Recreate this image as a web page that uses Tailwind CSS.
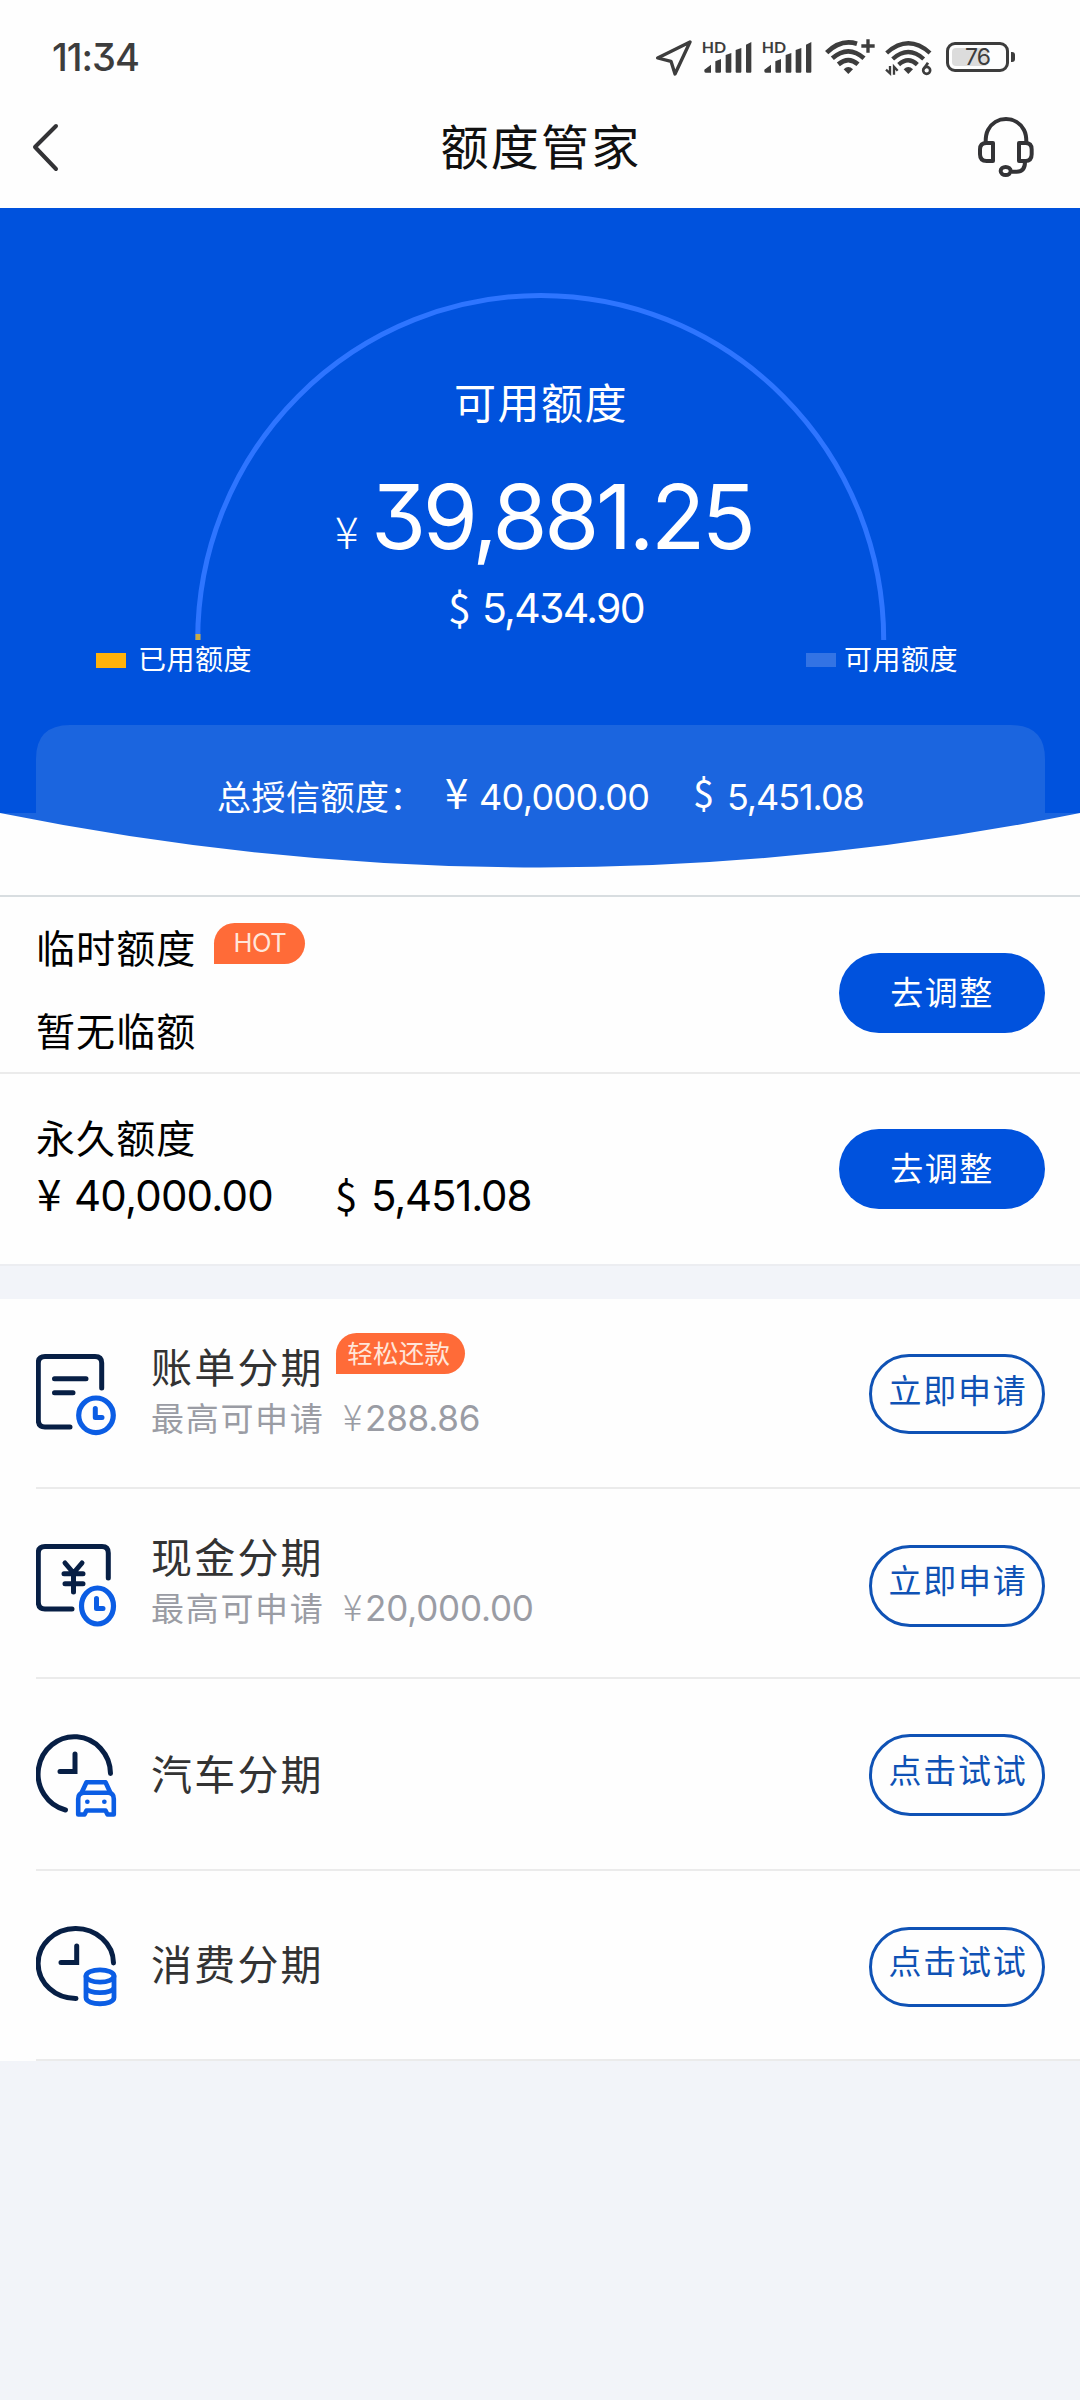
<!DOCTYPE html>
<html lang="zh-CN">
<head>
<meta charset="utf-8">
<title>额度管家</title>
<script src="https://cdn.jsdelivr.net/npm/@tailwindcss/browser@4"></script>
</head>
<body class="w-[1080px] h-[2400px] bg-[#f2f4f9] font-['Noto_Sans_CJK_SC',sans-serif] text-black overflow-hidden">

<!-- Status bar -->
<header class="bg-[#fefefe] h-[208px]">
  <div class="h-[114px] flex items-start justify-between pl-[52px] pr-[65px] text-[#3d3d3d]">
    <div class="mt-[27px] h-[60px] leading-[60px] text-[38px] font-[Inter] font-medium tracking-[-1px] [font-feature-settings:'cv09']">11:34</div>
    <div class="flex items-start">
      <svg class="mt-[40px] mr-[10px] w-[36px] h-[37px]" viewBox="48 60 108 111" fill="none" stroke="#3d3d3d" stroke-width="10" stroke-linejoin="round"><path d="M150 66 L53 114 L93 124 L105 162 Z"/></svg>
      <svg class="mt-[40px] mr-[10px] w-[50px] h-[34px] overflow-visible" viewBox="186 60 150 102" fill="#3d3d3d"><text x="185" y="99" font-size="48" font-weight="700" font-family="Lato" textLength="73" lengthAdjust="spacingAndGlyphs">HD</text><path d="M193 149 L213 134 V158 H197 Q193 158 193 154Z M226 124 L243 117 V155 Q243 158 240 158 H229 Q226 158 226 155Z M257 105 L274 99 V155 Q274 158 271 158 H260 Q257 158 257 155Z M287 90 L304 84 V155 Q304 158 301 158 H290 Q287 158 287 155Z M318 74 L334 66 V155 Q334 158 331 158 H321 Q318 158 318 155Z"/></svg>
      <svg class="mt-[40px] mr-[13px] w-[50px] h-[34px] overflow-visible" viewBox="186 60 150 102" fill="#3d3d3d"><text x="185" y="99" font-size="48" font-weight="700" font-family="Lato" textLength="73" lengthAdjust="spacingAndGlyphs">HD</text><path d="M193 149 L213 134 V158 H197 Q193 158 193 154Z M226 124 L243 117 V155 Q243 158 240 158 H229 Q226 158 226 155Z M257 105 L274 99 V155 Q274 158 271 158 H260 Q257 158 257 155Z M287 90 L304 84 V155 Q304 158 301 158 H290 Q287 158 287 155Z M318 74 L334 66 V155 Q334 158 331 158 H321 Q318 158 318 155Z"/></svg>
      <svg class="mt-[38px] mr-[10px] w-[50px] h-[38px]" viewBox="554 54 150 114" fill="none" stroke="#3d3d3d" stroke-width="14"><path d="M559 98 Q601 56 650 71"/><path d="M576 115 Q624 73 671 115"/><path d="M594 133 Q624 108 653 133"/><path d="M683 58 V98 M663 78 H703" stroke-width="10"/><path d="M610 148 Q624 134 638 148 L624 162Z" fill="#3d3d3d" stroke="none"/></svg>
      <svg class="mt-[40px] mr-[14px] w-[47px] h-[36px]" viewBox="734 60 141 108" fill="none" stroke="#3d3d3d" stroke-width="13"><path d="M739 99 Q804 41 869 99"/><path d="M757 117 Q804 75 850 117"/><path d="M775 134 Q804 108 831 134"/><path d="M790 148 Q804 134 818 148 L804 162Z" fill="#3d3d3d" stroke="none"/><path d="M737 149 L749 160 V138 M772 152 L761 140 V164" stroke-width="7"/><circle cx="859" cy="151" r="10.500" stroke-width="8"/><path d="M850 147 L863 128" stroke-width="8"/></svg>
      <div class="mt-[42px] flex items-center">
        <div class="w-[63px] h-[30px] rounded-[9px] border-[3px] border-[#3d3d3d] p-[3px] relative">
          <div class="w-[36px] h-[18px] bg-[#dcdcdc] rounded-[4px]"></div>
          <div class="absolute inset-0 flex items-center justify-center text-[23px] leading-[24px] font-[Inter] tracking-[-1px]">76</div>
        </div>
        <div class="ml-[2px] w-[4px] h-[10px] rounded-r-[3px] bg-[#3d3d3d]"></div>
      </div>
    </div>
  </div>
  <!-- Title bar -->
  <div class="h-[66px] flex items-center justify-between pl-[32px] pr-[46px]">
    <svg class="w-[56px] h-[50px]" viewBox="0 0 56 50" fill="none" stroke="#333336" stroke-width="4" stroke-linecap="round" stroke-linejoin="round"><path d="M24 4 L3 25 L24 47"/></svg>
    <h1 class="ml-[16px] text-[48px] leading-[66px] tracking-[2.2px] text-[#111] pb-[6px]">额度管家</h1>
    <svg class="w-[56px] h-[60px]" viewBox="1014 293 168 180" fill="none" stroke="#333336" stroke-width="12"><path d="M1037 368 Q1037 345 1044 332 A61 61 0 0 1 1152 332 Q1159 345 1159 368"/><path d="M1059 371 H1040 Q1020 371 1020 390 V405 Q1020 425 1040 425 H1059Z M1137 371 H1156 Q1175 371 1175 390 V405 Q1175 425 1156 425 H1137Z" stroke-linejoin="round"/><path d="M1155 427 Q1155 457 1130 457 H1116"/><ellipse cx="1097" cy="455" rx="15" ry="12"/></svg>
  </div>
</header>

<!-- Limit overview -->
<section class="relative h-[660px] bg-[#fefefe] text-white">
  <svg class="absolute inset-0 w-[1080px] h-[660px]" viewBox="0 0 1080 660">
    <path d="M0 0H1080V605H0Z" fill="#0052dd"/>
    <path d="M36 605 V551 Q36 517 70 517 H1011 Q1045 517 1045 551 V605 H1080 Q540 714 0 605Z" fill="#1b65df"/>
    <path d="M197.700 432 A343 344.500 0 0 1 883.700 432" fill="none" stroke="#2e75ff" stroke-width="5"/>
    <path d="M195.500 426h5v6h-5z" fill="#c9ab45"/>
  </svg>
  <div class="relative pt-[163px]">
    <div class="h-[60px] leading-[60px] text-[42px] tracking-[1.5px] pl-[454px]">可用额度</div>
    <div class="mt-[36px] h-[100px] leading-[100px] flex items-baseline">
      <span class="ml-[335px] w-[36px] text-[44px] font-light">¥</span>
      <span class="text-[89px] font-[Inter] tracking-[-3.4px] [font-feature-settings:'cv09']">39,881.25</span>
    </div>
    <div class="mt-[13px] h-[50px] leading-[50px] text-[41px] flex items-baseline pl-[448px]"><span class="w-[34px]">$</span><span class="font-[Inter] tracking-[-1.7px] [font-feature-settings:'cv09']">5,434.90</span></div>
    <div class="mt-[8px] h-[40px] leading-[40px] text-[28px] tracking-[0.5px] flex items-center">
      <i class="ml-[96px] w-[30px] h-[15px] mt-[5px] bg-[#ffb20a]"></i><span class="ml-[12px] w-[668px]">已用额度</span>
      <i class="w-[30px] h-[14px] mt-[4px] bg-[#3373e4]"></i><span class="ml-[8px]">可用额度</span>
    </div>
    <div class="mt-[84px] h-[60px] leading-[60px] flex items-baseline text-[34px]">
      <span class="ml-[217px] w-[228px] tracking-[0.5px]">总授信额度：</span>
      <span class="w-[34px] text-[42px] -translate-y-[1px]">¥</span><span class="w-[214px] text-[36px] font-[Inter] tracking-[-0.7px]">40,000.00</span>
      <span class="w-[34px] text-[38px] -translate-y-[2px]">$</span><span class="text-[36px] font-[Inter] tracking-[-1.1px]">5,451.08</span>
    </div>
  </div>
</section>

<!-- Limit adjustment -->
<section class="bg-[#fefefe] pt-[27px] h-[396px]">
  <div class="h-[179px] border-y-2 border-t-[#d8dde0] border-b-[#ebebeb] pl-[36px] pr-[35px] flex justify-between items-start">
    <div class="text-[39px] tracking-[1.1px]">
      <div class="mt-[19px] h-[60px] leading-[60px] flex">临时额度
        <span class="ml-[18px] mt-[7px] w-[91px] h-[41px] rounded-[21px] rounded-bl-none bg-[#ff6b38] text-[#ffe6da] text-[25.500px] font-[Inter] tracking-[-0.5px] leading-[40px] text-center">HOT</span>
      </div>
      <div class="mt-[23px] h-[60px] leading-[60px]">暂无临额</div>
    </div>
    <button class="mt-[56px] w-[206px] h-[80px] rounded-full bg-[#0052dd] text-white text-[33px] tracking-[1.5px] leading-[76px] pb-[4px]">去调整</button>
  </div>
  <div class="pl-[36px] pr-[35px] flex justify-between items-start">
    <div>
      <div class="mt-[32px] h-[60px] leading-[60px] text-[39px] tracking-[1.1px]">永久额度</div>
      <div class="mt-[1px] h-[50px] leading-[50px] text-[42px] flex items-baseline"><span class="w-[38px] pl-[1px] text-[44px]">¥</span><span class="w-[261px] font-[Inter] tracking-[-0.8px]">40,000.00</span><span class="w-[36px] text-[40px]">$</span><span class="font-[Inter] tracking-[-1.2px]">5,451.08</span></div>
    </div>
    <button class="mt-[55px] w-[206px] h-[80px] rounded-full bg-[#0052dd] text-white text-[33px] tracking-[1.5px] leading-[76px] pb-[4px]">去调整</button>
  </div>
</section>
<div class="h-[35px] border-t-2 border-[#ecedf1]"></div>

<!-- Instalment products -->
<section class="bg-[#fefefe] pl-[36px] text-[#333]">
  <div class="h-[190px] border-b-2 border-[#ebebeb] flex items-start pr-[35px]">
    <svg class="mt-[55px] w-[82px] h-[84px] shrink-0" viewBox="0 0 82 84" fill="none" stroke="#071f45" stroke-width="5" stroke-linecap="round"><path d="M65.700 34 V9 Q65.700 2.500 59 2.500 H9 Q2.300 2.500 2.300 9 V66 Q2.300 73 9 73 H34"/><path d="M18.500 24.700 H50 M18.500 38.700 H37"/><g stroke="#0b5de4" stroke-width="5.200"><circle cx="60" cy="61.300" r="17.300"/><path d="M59.300 54.500 V63.500 H66" stroke-linejoin="round" stroke-width="5"/></g></svg>
    <div class="ml-[33px] grow">
      <div class="mt-[36px] h-[60px] leading-[60px] text-[41px] tracking-[2.2px] flex">账单分期
        <span class="ml-[12px] -mt-[2px] w-[129px] h-[41px] rounded-[21px] rounded-bl-none bg-[#ff6b38] text-[#ffe6da] text-[25.500px] tracking-[0.3px] leading-[37px] pr-[3px] text-center">轻松还款</span>
      </div>
      <div class="mt-[-5px] h-[50px] leading-[50px] text-[33px] text-[#9a9ca4] flex items-baseline"><span class="w-[192px] tracking-[1.7px]">最高可申请</span><span class="w-[22px] text-[36px] font-light">¥</span><span class="text-[35px] font-[Inter] tracking-[-0.2px]">288.86</span></div>
    </div>
    <button class="mt-[55px] w-[176px] h-[80px] rounded-[40px] border-3 border-[#0f52b5] text-[#0f52b5] text-[33px] tracking-[1.7px] leading-[65px] pb-[9px] pl-[2px]">立即申请</button>
  </div>
  <div class="h-[190px] border-b-2 border-[#ebebeb] flex items-start pr-[35px]">
    <svg class="mt-[55px] w-[82px] h-[84px] shrink-0" viewBox="0 0 82 84" fill="none" stroke="#071f45" stroke-width="5" stroke-linecap="round"><path d="M72.300 34 V9 Q72.300 2.500 66 2.500 H9 Q2.300 2.500 2.300 9 V58 Q2.300 65 9 65 H36"/><path d="M29 19 L37.500 29 L46 19 M28 29.700 H47 M29 39.700 H47 M37.500 29 V48"/><g stroke="#0b5de4" stroke-width="5.200"><ellipse cx="61.500" cy="62" rx="16" ry="18"/><path d="M60.500 54.500 V64.500 H67" stroke-linejoin="round" stroke-width="5"/></g></svg>
    <div class="ml-[33px] grow">
      <div class="mt-[36px] h-[60px] leading-[60px] text-[41px] tracking-[2.2px]">现金分期</div>
      <div class="mt-[-5px] h-[50px] leading-[50px] text-[33px] text-[#9a9ca4] flex items-baseline"><span class="w-[192px] tracking-[1.7px]">最高可申请</span><span class="w-[22px] text-[36px] font-light">¥</span><span class="text-[35px] font-[Inter] tracking-[-0.2px]">20,000.00</span></div>
    </div>
    <button class="mt-[56px] w-[176px] h-[82px] rounded-[41px] border-3 border-[#0f52b5] text-[#0f52b5] text-[33px] tracking-[1.7px] leading-[63px] pb-[13px] pl-[2px]">立即申请</button>
  </div>
  <div class="h-[192px] border-b-2 border-[#ebebeb] flex items-start pr-[35px]">
    <svg class="mt-[55px] w-[82px] h-[84px] shrink-0" viewBox="0 0 82 84" fill="none" stroke="#071f45" stroke-width="5" stroke-linecap="round"><path d="M74.500 39.500 A36.200 37.200 0 1 0 29.500 76"/><path d="M39 20 V37.500 H24"/><g stroke="#0b5de4" stroke-width="4.600" stroke-linejoin="round"><path d="M45.500 59 L50.500 48.200 H69.500 L74.500 59"/><path d="M48 58.800 H72 Q77.800 58.800 77.800 65 V80.500 H71.500 L69.500 76.500 H50.500 L48.500 80.500 H42.200 V65 Q42.200 58.800 48 58.800Z"/><path d="M51.300 67.700h.1M68.300 67.700h.1"/></g></svg>
    <div class="ml-[33px] grow mt-[63px] h-[60px] leading-[60px] text-[41px] tracking-[2.2px]">汽车分期</div>
    <button class="mt-[55px] w-[176px] h-[82px] rounded-[41px] border-3 border-[#0f52b5] text-[#0f52b5] text-[33px] tracking-[1.7px] leading-[64px] pb-[12px] pl-[2px]">点击试试</button>
  </div>
  <div class="h-[190px] border-b-2 border-[#ebebeb] flex items-start pr-[35px]">
    <svg class="mt-[55px] w-[82px] h-[84px] shrink-0" viewBox="0 0 82 84" fill="none" stroke="#071f45" stroke-width="5" stroke-linecap="round"><path d="M77.500 37 A37.700 35 0 1 0 40 72.500"/><path d="M40.700 20 V36.500 H25"/><g stroke="#0b5de4" stroke-width="4.800"><ellipse cx="64" cy="50" rx="14" ry="6.200"/><path d="M50 50 V71.500 C50 79.800 78 79.800 78 71.500 V50 M50 61 C50 68.500 78 68.500 78 61"/></g></svg>
    <div class="ml-[33px] grow mt-[61px] h-[60px] leading-[60px] text-[41px] tracking-[2.2px]">消费分期</div>
    <button class="mt-[56px] w-[176px] h-[80px] rounded-[40px] border-3 border-[#0f52b5] text-[#0f52b5] text-[33px] tracking-[1.7px] leading-[60px] pb-[14px] pl-[2px]">点击试试</button>
  </div>
</section>
</body>
</html>
